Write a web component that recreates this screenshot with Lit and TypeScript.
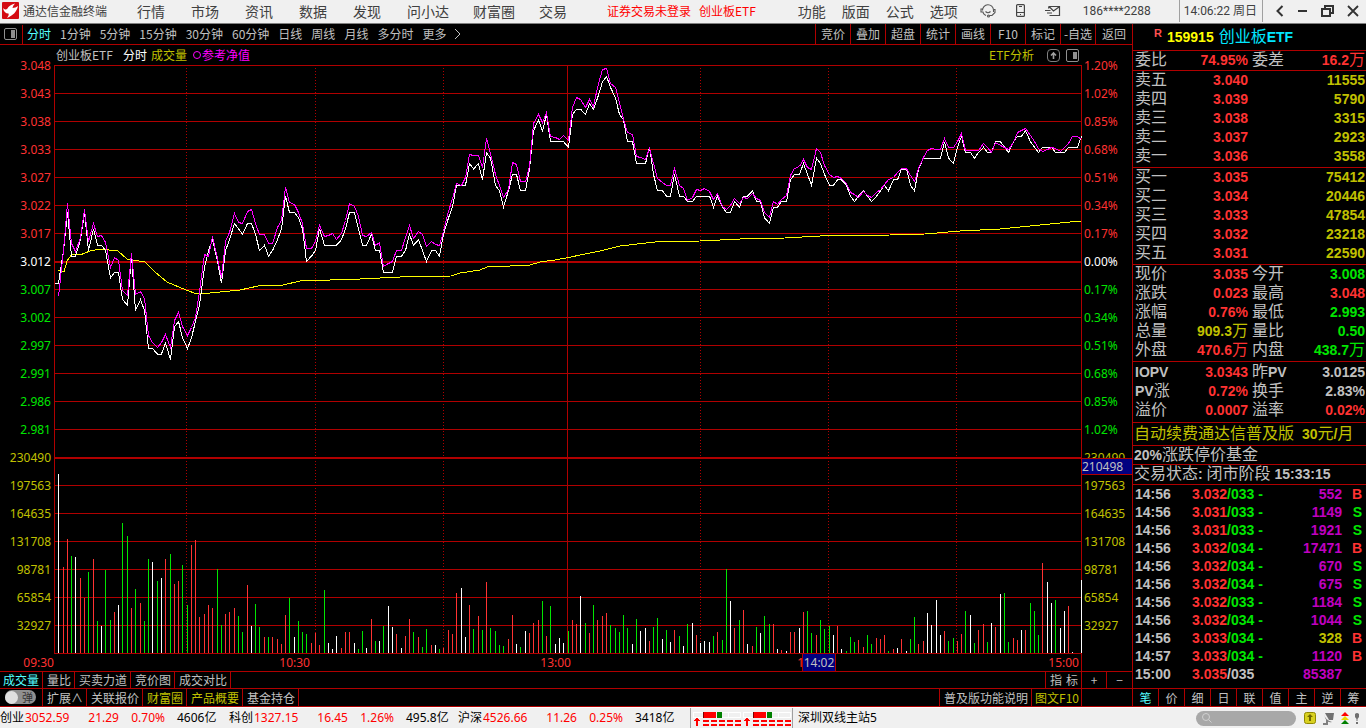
import { LitElement, html, svg, css } from "lit";
import { customElement, state } from "lit/decorators.js";
import { classMap } from "lit/directives/class-map.js";

/* Plot geometry: one unit is one pixel at the default window width. */
const PLOT_W = 1028;
const PLOT_H = 589;
const ROW = 28;
const ZERO_Y = 196.5;
const TICK = 5.444;
const minuteX = (i: number) => Math.round((i * 1027) / 240) + 0.5;

const PRICE = [
  -4, -4, 2, 9, 1, 1, 4, 9, 2, 6, 3, 3, 2, -3, -2, -2, -7, -8, 1, -9, -7, -9, -16, -16, -17, -17, -15, -18, -12, -11,
  -14, -16, -14, -11, -8, -1, 2, 4, 0, -4, 2, 4, 7, 6, 5, 7, 7, 5, 2, 3, 1, 2, 4, 6, 12, 9, 9, 8, 6, 0,
  1, 2, 6, 3, 3, 3, 3, 4, 6, 9, 9, 6, 3, 3, 5, 2, 2, -2, -2, -2, 1, 1, 2, 5, 3, 4, 2, 0, 2, 2,
  1, 5, 8, 10, 14, 14, 14, 18, 17, 18, 15, 20, 19, 14, 13, 10, 13, 16, 16, 13, 13, 17, 24, 26, 24, 27, 22, 22, 22, 22,
  21, 27, 28, 28, 27, 29, 28, 30, 33, 34, 32, 30, 27, 26, 22, 22, 18, 18, 18, 21, 16, 13, 13, 12, 12, 16, 12, 12, 11, 11,
  12, 12, 12, 12, 10, 12, 10, 9, 9, 11, 10, 12, 12, 13, 11, 11, 8, 7, 10, 10, 11, 11, 15, 16, 16, 18, 16, 14, 19, 18,
  16, 14, 14, 15, 15, 14, 12, 11, 12, 13, 12, 11, 12, 13, 14, 13, 15, 15, 17, 17, 14, 13, 17, 19, 19, 19, 19, 19, 22, 19,
  18, 21, 23, 20, 20, 19, 20, 21, 20, 20, 22, 22, 21, 20, 22, 23, 23, 24, 22, 21, 20, 21, 21, 21, 20, 20, 20, 21, 21, 21,
  23,
];

/* Reference net value, as heights on the plot, from the second sample on. */
const NAV = [
  231, 185, 138, 178, 186, 172, 144, 176, 158, 171, 170, 177, 202, 192, 195, 225, 230, 188, 229, 226, 233, 270, 277, 282,
  277, 269, 282, 255, 247, 261, 270, 262, 252, 226, 189, 191, 171, 193, 212, 176, 167, 148, 157, 158, 146, 144, 158, 169,
  169, 178, 178, 162, 155, 122, 137, 139, 147, 158, 183, 183, 176, 160, 171, 170, 168, 174, 168, 155, 138, 141, 151, 170,
  171, 167, 180, 177, 201, 198, 196, 185, 185, 172, 160, 173, 166, 169, 181, 176, 179, 180, 166, 146, 133, 118, 120, 112,
  89, 90, 90, 102, 73, 88, 109, 120, 132, 124, 97, 99, 116, 116, 101, 58, 49, 57, 47, 71, 72, 74, 70, 75,
  42, 32, 34, 42, 34, 41, 22, 4, 3, 18, 22, 37, 54, 67, 69, 91, 92, 94, 83, 98, 113, 117, 120, 120,
  103, 120, 123, 135, 132, 124, 125, 123, 126, 134, 128, 141, 144, 140, 133, 138, 132, 133, 128, 133, 135, 147, 152, 136,
  139, 134, 130, 110, 103, 101, 94, 102, 104, 83, 87, 100, 109, 112, 111, 113, 118, 127, 129, 132, 126, 130, 132, 127,
  124, 119, 114, 112, 107, 103, 103, 110, 116, 103, 92, 85, 83, 84, 84, 73, 82, 82, 76, 68, 85, 85, 85, 85,
  78, 82, 87, 77, 80, 82, 84, 77, 67, 65, 63, 70, 76, 83, 86, 84, 82, 83, 86, 82, 78, 71, 71, 74,
];

/* Average price curve: x, y pairs. */
const AVERAGE =
  "4,205 7,206 10,207 13,196 18,189 26,190 36,186 46,184 64,186 73,194 91,197 101,207 113,217 132,225 143,229 156,228 " +
  "186,225 204,221 229,220 246,216 276,215 306,214 346,212 397,211 406,208 426,205 433,202 456,201 476,200 486,197 501,195 512,193 " +
  "531,189 546,186 566,181 601,177 646,176 686,174 731,173 766,171 836,170 871,169 906,166 946,164 966,162 986,160 1006,158 1027,156";

/* Volume bars: colour letter (w, r, g) and height. */
const VOLUME = (
  "w179 r86 r114 g97 w96 r75 r55 g81 r94 g32 w27 g83 g33 r41 w48 g130 g117 r45 g64 r50 g32 g94 w91 g72 w75 r94 g99 r69 r72 g88 " +
  "g48 r108 r113 r36 r39 r48 r45 g84 g28 r39 r41 r45 g37 g21 r68 w27 g49 g26 r16 g16 r16 r14 r9 r38 g55 w16 g32 g21 g19 r10 " +
  "r20 r8 g63 w10 w4 w17 r5 r21 r21 w10 g4 g22 w5 r34 g12 w12 g27 w47 w26 r19 w5 r17 r34 g21 r16 g6 g24 r8 w8 g4 " +
  "r5 r23 r19 r60 w65 w16 r48 g24 r37 g23 r71 g25 g22 g8 g7 r14 r38 w9 g6 w22 r20 r30 r33 g52 r17 g47 w9 w15 w10 g22 " +
  "r33 r29 w57 g30 r20 g48 r33 r37 r40 g28 g25 g21 g38 g25 w9 g34 w22 w25 r12 g26 g35 w14 g23 w11 r23 g17 w7 g29 w30 r18 " +
  "w10 w12 w11 g17 r21 g13 g84 w52 r25 g33 r43 w9 r7 g26 w20 g37 g29 r29 w4 r3 w2 r21 r21 w25 r41 g42 g20 r18 g33 g24 " +
  "g27 w18 r27 w4 g2 g16 g11 r13 r6 g18 g9 r15 r14 r18 g2 r4 w5 r14 w2 g14 g36 r9 r12 w40 w28 w53 w18 r22 g12 g15 " +
  "r12 r19 g42 w38 g10 r23 r29 g11 w30 r26 w59 g60 g11 r15 r13 w23 r23 g50 g42 g18 r90 w71 w50 g53 w25 w42 r47 w1 w0 w73"
).split(" ");

const volumePath = (colour: string) =>
  VOLUME.map((v, i) => (v[0] === colour ? `M${minuteX(i + 1)} 588V${588 - Number(v.slice(1))}` : "")).join("");

const LEFT_AXIS = "3.048 3.043 3.038 3.033 3.027 3.022 3.017 3.012 3.007 3.002 2.997 2.991 2.986 2.981".split(" ");
const RIGHT_AXIS = "1.20 1.02 0.85 0.68 0.51 0.34 0.17 0.00 0.17 0.34 0.51 0.68 0.85 1.02".split(" ");
const VOLUME_AXIS = "230490 197563 164635 131708 98781 65854 32927".split(" ");

@customElement("intraday-chart")
class IntradayChart extends LitElement {
  static styles = css`
    :host { display: block; font: 12px/18px "Noto Sans", "Noto Sans CJK SC", sans-serif; color: #c0c0c0; }
    .chart { display: grid; grid-template-columns: 54px minmax(0, 1fr) 50px; }
    .axis { padding-top: 7px; line-height: 28px; color: #c0c000; }
    .left { text-align: right; padding-right: 3px; }
    .right { padding-left: 2px; position: relative; }
    .up { color: #ff3232; }
    .down { color: #00e600; }
    .flat { color: #fff; }
    .head { display: flex; align-items: center; height: 20px; padding: 0 3px 0 2px; font-family: "Noto Sans CJK SC", sans-serif; }
    .head .now { color: #fff; margin-left: 10px; }
    .head .vol { color: #c0c000; margin-left: 4px; }
    .head .nav { color: #ff00ff; margin-left: 5px; display: flex; align-items: center; }
    .head .more { margin-left: auto; color: #c0c000; text-decoration: none; }
    .head button { all: unset; display: flex; width: 13px; height: 13px; margin-left: 6px; }
    .head button:first-of-type { margin-left: 13px; }
    .plot { display: block; width: 100%; height: 589px; shape-rendering: crispEdges; }
    .plot * { vector-effect: non-scaling-stroke; }
    .grid { stroke: #b00000; fill: none; }
    .heavy { stroke: #b00000; stroke-width: 2; fill: none; }
    .dots { stroke: #b00000; stroke-dasharray: 1 2; fill: none; }
    .price { stroke: #fff; fill: none; }
    .value { stroke: #ff00ff; fill: none; }
    .average { stroke: #ffff00; fill: none; }
    .bars-w { stroke: #fff; }
    .bars-r { stroke: #ff3232; }
    .bars-g { stroke: #00e600; }
    .marker {
      position: absolute; left: 0; right: 0; top: 413px; line-height: 15px;
      border: solid #b00000; border-width: 1px 0; background: #000080; color: #c0c0c0;
    }
    .times {
      display: grid; grid-template-columns: 54px 256fr 261fr 265fr 246fr 50px; height: 17px; line-height: 17px;
      color: #ff3232; text-align: right; border-bottom: 1px solid #b00000;
    }
    .times .cell { position: relative; }
    .times .late { padding-right: 8px; }
    .times .end { border-right: 1px solid #b00000; padding-right: 2px; }
    .cursor {
      position: absolute; right: 0; top: 0; width: 32px; text-align: center; background: #000080; color: #c0c0c0;
      border: solid #b00000; border-width: 0 1px;
    }
  `;

  private tone(i: number) {
    return i < 7 ? "up" : i === 7 ? "flat" : "down";
  }

  render() {
    const price = PRICE.map((p, i) => `${minuteX(i)},${(ZERO_Y - p * TICK).toFixed(1)}`).join(" ");
    const nav = NAV.map((y, i) => `${minuteX(i + 1)},${y + 0.5}`).join(" ");
    const rows = Array.from({ length: 22 }, (_, k) => (k === 7 || k === 14 ? "" : `M0 ${k * ROW + 0.5}H${PLOT_W}`)).join("");
    return html`
      <div class="chart">
        <div class="axis left">
          ${LEFT_AXIS.map((t, i) => html`<div class=${this.tone(i)}>${t}</div>`)}
          ${VOLUME_AXIS.map((t) => html`<div>${t}</div>`)}
        </div>
        <div>
          <div class="head">
            <span>创业板ETF</span><span class="now">分时</span><span class="vol">成交量</span>
            <span class="nav"><svg width="10" height="12" viewBox="0 0 10 12"><circle cx="5" cy="6" r="3.5" fill="none" stroke="#ff00ff" /></svg>参考净值</span>
            <a class="more" href="#etf">ETF分析</a>
            <button aria-label="上移">
              <svg width="13" height="13" viewBox="0 0 13 13" fill="none" stroke="#a0a0a0">
                <rect x=".5" y=".5" width="12" height="12" rx="3.5" stroke="#808080" />
                <path d="M6.5 10V4M4 6.500L6.500 4L9 6.500" stroke-width="1.6" />
              </svg>
            </button>
            <button aria-label="侧栏">
              <svg width="13" height="13" viewBox="0 0 13 13">
                <rect x=".5" y=".5" width="12" height="12" rx="1.500" fill="none" stroke="#909090" /><path d="M7 3h4v7H7z" fill="#909090" />
              </svg>
            </button>
          </div>
          <svg class="plot" viewBox="0 0 ${PLOT_W} ${PLOT_H}" preserveAspectRatio="none" role="img" aria-label="创业板ETF 分时">
            ${svg`
              <path class="grid" d=${rows + "M.5 0V589M513.5 0V589M1027.5 0V589"} />
              <path class="dots" d="M132.5 3V589M261.5 3V589M389.5 3V589M646.5 3V589M774.5 3V589M902.5 3V589" />
              <path class="heavy" d="M0 197H1028M0 393H1028" />
              <path class="bars-w" d=${volumePath("w")} />
              <path class="bars-r" d=${volumePath("r")} />
              <path class="bars-g" d=${volumePath("g")} />
              <polyline class="average" points=${AVERAGE} />
              <polyline class="price" points=${price} />
              <polyline class="value" points=${nav} />
            `}
          </svg>
        </div>
        <div class="axis right">
          ${RIGHT_AXIS.map((t, i) => html`<div class=${this.tone(i)}>${t}%</div>`)}
          ${VOLUME_AXIS.map((t) => html`<div>${t}</div>`)}
          <div class="marker">210498</div>
        </div>
      </div>
      <div class="times">
        <div>09:30</div><div>10:30</div><div>13:00</div>
        <div class="cell late">14:00<span class="cursor">14:02</span></div>
        <div class="end">15:00</div><div></div>
      </div>
    `;
  }
}

type Tone = "r" | "g" | "y" | "n";
type Stat = [string, string, Tone, string, string, Tone];

const ASKS = [["卖五", "3.040", "11555"], ["卖四", "3.039", "5790"], ["卖三", "3.038", "3315"], ["卖二", "3.037", "2923"], ["卖一", "3.036", "3558"]];
const BIDS = [["买一", "3.035", "75412"], ["买二", "3.034", "20446"], ["买三", "3.033", "47854"], ["买四", "3.032", "23218"], ["买五", "3.031", "22590"]];
const RATIO: Stat[] = [["委比", "74.95%", "r", "委差", "16.2万", "r"]];
const STATS: Stat[] = [
  ["现价", "3.035", "r", "今开", "3.008", "g"],
  ["涨跌", "0.023", "r", "最高", "3.048", "r"],
  ["涨幅", "0.76%", "r", "最低", "2.993", "g"],
  ["总量", "909.3万", "y", "量比", "0.50", "g"],
  ["外盘", "470.6万", "r", "内盘", "438.7万", "g"],
];
const FUND: Stat[] = [
  ["IOPV", "3.0343", "r", "昨PV", "3.0125", "n"],
  ["PV涨", "0.72%", "r", "换手", "2.83%", "n"],
  ["溢价", "0.0007", "r", "溢率", "0.02%", "r"],
];
const TRADES = [
  ["14:56", "3.032", "/033 -", "552", "B"], ["14:56", "3.031", "/033 -", "1149", "S"], ["14:56", "3.031", "/033 -", "1921", "S"],
  ["14:56", "3.032", "/034 -", "17471", "B"], ["14:56", "3.032", "/034 -", "670", "S"], ["14:56", "3.032", "/034 -", "675", "S"],
  ["14:56", "3.032", "/033 -", "1184", "S"], ["14:56", "3.032", "/034 -", "1044", "S"], ["14:56", "3.033", "/034 -", "328", "B"],
  ["14:57", "3.033", "/034 -", "1120", "B"], ["15:00", "3.035", "/035", "85387", ""],
];

@customElement("quote-panel")
class QuotePanel extends LitElement {
  static styles = css`
    :host {
      display: flex; flex-direction: column; border-left: 1px solid #b00000; color: #c0c0c0;
      font: bold 14px/19px "Liberation Sans", "Noto Sans CJK SC", sans-serif;
    }
    .zh { font: 16px/1px "Noto Sans CJK SC", sans-serif; }
    .title { display: flex; align-items: center; height: 26px; padding-left: 21px; border-bottom: 1px solid #b00000; color: #00e6ff; }
    .flag { color: #ff5050; font-size: 11px; line-height: 12px; align-self: flex-start; padding-top: 3px; }
    .code { color: #ffff00; margin: 0 5px; }
    .block { border-bottom: 1px solid #b00000; padding-bottom: 1px; }
    .tight { padding-bottom: 0; }
    .roomy { padding: 1px 0 2px; }
    table { width: 100%; border-collapse: collapse; table-layout: fixed; }
    th, td { padding: 0; white-space: nowrap; font-weight: bold; height: 19px; line-height: 19px; }
    th { text-align: left; padding-left: 2px; }
    td { text-align: right; padding-right: 1px; }
    .name { width: 35px; }
    .first { width: 81px; }
    .second { width: 40px; }
    .second-name { padding-left: 3px; }
    .r { color: #ff3232; }
    .g { color: #00e600; }
    .y { color: #c0c000; }
    .n { color: #c0c0c0; }
    .p { color: #c000c0; }
    .note { border-bottom: 1px solid #b00000; padding-left: 1px; white-space: nowrap; }
    .promo { line-height: 22px; color: #c0c000; }
    .limit { line-height: 18px; }
    .gap { margin-left: 8px; }
    .trades { flex: 1; border-bottom: 1px solid #b00000; padding-bottom: 5px; }
    .trades td, .trades th { height: 18px; line-height: 18px; }
    .time { width: 59px; }
    .deal { width: 82px; }
    .trades .deal-cell { text-align: left; }
    .side { width: 23px; }
    .side-cell { padding-right: 4px; }
    .tabs { display: flex; height: 17px; border-bottom: 1px solid #b00000; }
    .tabs button {
      all: unset; box-sizing: border-box; flex: 1; text-align: center; font: 12px/17px "Noto Sans CJK SC", sans-serif;
      border-left: 1px solid #b00000;
    }
    .tabs button:first-child { border-left: 0; }
    .tabs .on { color: #54ffff; }
  `;

  @state() private tab = "笔";

  /* Chinese characters are set larger and lighter than the figures beside them. */
  private mixed(text: string) {
    return text.split(/([\u4e00-\u9fff]+)/).filter(Boolean).map((t) => (/[\u4e00-\u9fff]/.test(t) ? html`<span class="zh">${t}</span>` : t));
  }

  private stats(rows: Stat[], extra: string) {
    return html`<div class="block ${extra}"><table>
      <colgroup><col class="name" /><col class="first" /><col class="second" /><col /></colgroup>
      <tbody>${rows.map(([a, av, at, b, bv, bt]) => html`<tr>
        <th scope="row">${this.mixed(a)}</th><td class=${at}>${this.mixed(av)}</td>
        <th class="second-name">${this.mixed(b)}</th><td class=${bt}>${this.mixed(bv)}</td>
      </tr>`)}</tbody></table></div>`;
  }

  private book(rows: string[][]) {
    return html`<div class="block"><table>
      <colgroup><col class="name" /><col class="first" /><col /></colgroup>
      <tbody>${rows.map(([a, p, v]) => html`<tr>
        <th scope="row">${this.mixed(a)}</th><td class="r">${p}</td><td class="y">${v}</td>
      </tr>`)}</tbody></table></div>`;
  }

  render() {
    return html`
      <div class="title"><span class="flag">R</span><span class="code">159915</span><span>${this.mixed("创业板ETF")}</span></div>
      ${this.stats(RATIO, "tight")} ${this.book(ASKS)} ${this.book(BIDS)} ${this.stats(STATS, "")} ${this.stats(FUND, "roomy")}
      <div class="note promo">${this.mixed("自动续费通达信普及版")}<span class="gap">${this.mixed("30元/月")}</span></div>
      <div class="note limit">${this.mixed("20%涨跌停价基金")}</div>
      <div class="note">${this.mixed("交易状态: 闭市阶段 15:33:15")}</div>
      <div class="trades"><table>
        <colgroup><col class="time" /><col class="deal" /><col /><col class="side" /></colgroup>
        <tbody>${TRADES.map(([t, p, q, v, s]) => html`<tr>
          <th scope="row">${t}</th>
          <td class="deal-cell"><span class="r">${p}</span><span class=${s ? "g" : "n"}>${q}</span></td>
          <td class=${v === "328" ? "y" : "p"}>${v}</td>
          <td class="side-cell ${s === "B" ? "r" : "g"}">${s}</td>
        </tr>`)}</tbody></table></div>
      <nav class="tabs">${[..."笔价细日联值主逆筹"].map((t) => html`
        <button class=${classMap({ on: t === this.tab })} @click=${() => (this.tab = t)}>${t}</button>`)}</nav>
    `;
  }
}

const INDICES = [
  ["创业", "3052.59", "21.29", "0.70%", "4606亿"],
  ["科创", "1327.15", "16.45", "1.26%", "495.8亿"],
  ["沪深", "4526.66", "11.26", "0.25%", "3418亿"],
];

@customElement("app-root")
class AppRoot extends LitElement {
  static styles = css`
    :host {
      display: flex; flex-direction: column; min-height: 100vh; background: #000; color: #c0c0c0; overflow: hidden;
      font: 12px/18px "Noto Sans CJK SC", sans-serif;
    }
    button { all: unset; box-sizing: border-box; white-space: nowrap; }
    svg { display: block; }
    .titlebar {
      display: flex; align-items: center; height: 21px; padding: 0 0 2px 2px; background: #f0f0f0; color: #404040;
      border-bottom: 1px solid #808080; white-space: nowrap;
    }
    .brand { margin: 0 30px 0 4px; }
    .menu { display: flex; gap: 26px; font-size: 14px; }
    .close { gap: 24px; margin-left: 26px; }
    .login { display: flex; gap: 8px; margin-left: 40px; color: #ff0000; }
    .tools { display: flex; gap: 16px; margin-left: auto; font-size: 14px; }
    .contact { display: flex; align-items: center; gap: 20px; margin-left: 22px; }
    .phone { font: 12px/18px Roboto, sans-serif; margin: 0 28px 0 22px; }
    .clock {
      font: 12px/22px Roboto, "Noto Sans CJK SC", sans-serif; padding: 0 5px 0 4px; border: solid #a0a0a0; border-width: 0 1px;
    }
    .window { display: flex; align-items: center; gap: 13px; padding: 0 7px 0 12px; }
    .body { display: grid; grid-template-columns: minmax(0, 1fr) 234px; flex: 1; }
    .left { display: flex; flex-direction: column; }
    .toolbar { display: flex; height: 20px; line-height: 18px; border-bottom: 1px solid #b00000; }
    .side-toggle { padding: 2px 5px 4px 4px; border-right: 1px solid #b00000; margin-top: 1px; }
    .periods { display: flex; gap: 9px; padding-left: 4px; }
    .on { color: #54ffff; }
    .gold { color: #c0c000; }
    .actions { display: flex; margin-left: auto; }
    .actions button { width: 35px; text-align: center; border-left: 1px solid #b00000; }
    .actions button:last-child { width: 37px; }
    .row { display: flex; height: 16px; line-height: 16px; border-bottom: 1px solid #b00000; }
    .low { height: 17px; line-height: 17px; }
    .row > button, .cell { box-sizing: border-box; border-right: 1px solid #b00000; padding: 0 3px 0 4px; }
    .row > .lead { width: 43px; padding: 0 3px; }
    .row > .push { margin-left: auto; border-left: 1px solid #b00000; }
    .row > .spaced { width: 37px; word-break: keep-all; display: flex; justify-content: space-between; }
    .row > .step { width: 25px; text-align: center; padding: 0; }
    .row > .last { border-right: 0; }
    .row > .doc { padding: 0 2px 0 3px; }
    .void { width: 50px; }
    .pill {
      display: flex; align-items: center; gap: 4px; width: 31px; height: 14px; margin: 1px 0 0 2px; border-radius: 7px;
      background: #909090; color: #333; font-size: 11px; line-height: 14px;
    }
    .pill input { appearance: none; margin: 0; width: 13px; height: 13px; border-radius: 50%; background: #e0e0e0; }
    .status {
      display: flex; align-items: center; height: 20px; background: #f0f0f0; border-top: 1px solid #fff; color: #000;
      font: 12px/20px "Noto Sans", "Noto Sans CJK SC", sans-serif; white-space: nowrap;
    }
    .index { display: grid; grid-template-columns: 25px 52px 42px 46px 64px; color: #ff0000; }
    .index .name { color: #000; }
    .index .num { text-align: right; }
    .index .amount { color: #000; padding-left: 12px; }
    .lights { display: flex; gap: 1px; padding: 0 1px; border: solid #a0a0a0; border-width: 0 1px; height: 20px; align-items: center; margin-left: 3px; }
    .host { margin-left: 5px; }
    .tray { display: flex; align-items: center; gap: 6px; margin-left: auto; padding-right: 7px; }
    .search { display: flex; align-items: center; width: 100px; height: 15px; border-radius: 8px; background: #a8a8a8; padding-left: 5px; box-sizing: border-box; margin-right: 2px; }
    .search input { all: unset; width: 70px; height: 14px; font-size: 11px; color: #000; }
  `;

  @state() private period = "分时";

  private light() {
    return html`<svg width="49" height="17" viewBox="0 0 49 17" shape-rendering="crispEdges">
      <path d="M1.500 2.500H48.500V7.500H1.500ZM36.500 2V8" fill="none" stroke="#fff" />
      <path d="M11 2h1v6h-1z" fill="#800000" /><path d="M12 2h12v6H12z" fill="#ff0000" /><path d="M25 2h5v6h-5z" fill="#008000" />
      <path d="M5 8h1v1h1v1h1v1H6v5H4v-5H2v-1h1V9h1V8zM11 10h6v2h-6zM19 10h6v2h-6zM27 10h6v2h-6zM35 10h6v2h-6zM43 10h6v2h-6zM11 14h6v2h-6zM19 14h6v2h-6zM27 14h6v2h-6zM35 14h6v2h-6zM43 14h6v2h-6z" fill="#ff0000" />
    </svg>`;
  }

  render() {
    return html`
      <header class="titlebar">
        <svg width="17" height="17" viewBox="0 0 17 17">
          <rect width="17" height="17" rx="1" fill="#d40b12" />
          <path d="M1 6C2 7.500 4 8 5.500 6.500C6.500 4.500 8.500 2.500 13 1.500C11.500 3 10.800 4.500 10.500 6C12.500 6 14.500 5 16 4C15 9.500 11 13.500 5 16C6.500 14 7 12.500 6.500 11.500C3.500 11.500 1.500 9.500 1 6Z" fill="#fff" />
        </svg>
        <span class="brand">通达信金融终端</span>
        <nav class="menu">${["行情", "市场", "资讯", "数据", "发现"].map((t) => html`<button>${t}</button>`)}</nav>
        <nav class="menu close">${["问小达", "财富圈", "交易"].map((t) => html`<button>${t}</button>`)}</nav>
        <div class="login"><button>证券交易未登录</button><button>创业板ETF</button></div>
        <nav class="tools">${["功能", "版面", "公式", "选项"].map((t) => html`<button>${t}</button>`)}</nav>
        <div class="contact">
          <button aria-label="客服"><svg width="16" height="14" viewBox="0 0 16 14" fill="none" stroke="#555" stroke-width="1.100">
            <path d="M2.500 6.500A5.500 5.500 0 0 1 13.500 6V8M2.500 5H1V8H3.500M3 8.500A5.500 5.500 0 0 0 6 11.500M14 5.500H15V8.500L12 11.500H9.500M5.500 7.500Q8 10 10.500 7.500" /><circle cx="8.500" cy="12" r="1" />
          </svg></button>
          <button aria-label="手机"><svg width="9" height="13" viewBox="0 0 9 13" fill="none" stroke="#444" stroke-width="1.200">
            <rect x=".6" y=".6" width="7.800" height="11.800" rx="1" /><path d="M3 2.500H6M1 8.500H8M4 10.500H5" />
          </svg></button>
          <button aria-label="邮件"><svg width="16" height="12" viewBox="0 0 16 12" fill="none" stroke="#444" stroke-width="1.200">
            <path d="M3.500 3.500L4 1.500H14.500V10.500H4.500M4.500 2L8.500 6L14 2M0 5.500H5.500M2 8H7" />
          </svg></button>
        </div>
        <span class="phone">186****2288</span>
        <time class="clock">14:06:22 周日</time>
        <div class="window">
          <button aria-label="后退"><svg width="10" height="12" viewBox="0 0 10 12"><path d="M7.500 1L2.500 6L7.500 11" fill="none" stroke="#333" stroke-width="2" /></svg></button>
          <button aria-label="最小化"><svg width="10" height="12" viewBox="0 0 10 12"><path d="M0 6H9" stroke="#333" stroke-width="2" /></svg></button>
          <button aria-label="还原"><svg width="13" height="12" viewBox="0 0 13 12" fill="none" stroke="#333" stroke-width="2"><path d="M1 4H9V11H1ZM4 4V1H12V8H9" /></svg></button>
          <button aria-label="关闭"><svg width="12" height="12" viewBox="0 0 12 12"><path d="M1 1L11 11M11 1L1 11" stroke="#333" stroke-width="1.800" /></svg></button>
        </div>
      </header>
      <main class="body">
        <div class="left">
          <div class="toolbar">
            <button class="side-toggle" aria-label="侧栏"><svg width="13" height="12" viewBox="0 0 13 12">
              <rect x=".5" y=".5" width="12" height="11" rx="1.500" fill="none" stroke="#909090" /><path d="M7 2h4v8H7z" fill="#909090" />
            </svg></button>
            <nav class="periods">
              ${["分时", "1分钟", "5分钟", "15分钟", "30分钟", "60分钟", "日线", "周线", "月线", "多分时"].map(
                (t) => html`<button class=${classMap({ on: t === this.period })} @click=${() => (this.period = t)}>${t}</button>`
              )}
              <button>更多</button>
              <svg width="6" height="18" viewBox="0 0 6 18"><path d="M0 5L5 10L0 15" fill="none" stroke="#c0c0c0" /></svg>
            </nav>
            <div class="actions">${["竞价", "叠加", "超盘", "统计", "画线", "F10", "标记", "-自选", "返回"].map((t) => html`<button>${t}</button>`)}</div>
          </div>
          <intraday-chart></intraday-chart>
          <div class="row">
            <button class="lead on">成交量</button>
            ${["量比", "买卖力道", "竞价图", "成交对比"].map((t) => html`<button>${t}</button>`)}
            <button class="push spaced"><span>指</span><span>标</span></button><button class="step">+</button><button class="step last">−</button>
          </div>
          <div class="row low">
            <div class="cell lead"><label class="pill"><input type="checkbox" />弹</label></div>
            <button>扩展∧</button><button>关联报价</button><button class="gold">财富圈</button><button class="gold">产品概要</button><button>基金持仓</button>
            <button class="push">普及版功能说明</button><button class="gold doc">图文F10</button><span class="void"></span>
          </div>
        </div>
        <quote-panel></quote-panel>
      </main>
      <footer class="status">
        ${INDICES.map(([n, v, c, p, a]) => html`<div class="index">
          <span class="name">${n}</span><span>${v}</span><span class="num">${c}</span><span class="num">${p}</span><span class="amount">${a}</span>
        </div>`)}
        <div class="lights">${this.light()}${this.light()}</div>
        <span class="host">深圳双线主站5</span>
        <div class="tray">
          <label class="search">
            <svg width="12" height="12" viewBox="0 0 12 12" fill="none" stroke="#d0d0d0"><circle cx="5" cy="5" r="3.500" /><path d="M7.500 7.500L10.500 10.500" /></svg>
            <input type="text" aria-label="搜索" />
          </label>
          <svg width="12" height="12" viewBox="0 0 12 12"><rect x=".5" y=".5" width="11" height="11" rx="2" fill="#d8d020" stroke="#908800" /><path d="M6 2L9 5H7V9H5V5H3Z" fill="#706800" /></svg>
          <svg width="13" height="13" viewBox="0 0 13 13"><path d="M3 1L12 1L11 8L7 8Z" fill="#707070" /><path d="M2 2Q3 8 10 10Q4 12 2 2ZM4 8H6V13H1V11H4Z" fill="#808080" /></svg>
          <svg width="8" height="12" viewBox="0 0 8 12"><path d="M4 0L8 4H0Z" fill="#ff0000" /><path d="M4 4L8 8H0Z" fill="#e8d800" /><path d="M4 8L8 12H0Z" fill="#008000" /></svg>
          <svg width="4" height="11" viewBox="0 0 4 11"><path d="M0 1Q2-1 4 1V4L2.500 6V8H1.500V6L0 4ZM1 9H3V11H1Z" fill="#707070" /></svg>
        </div>
      </footer>
    `;
  }
}
